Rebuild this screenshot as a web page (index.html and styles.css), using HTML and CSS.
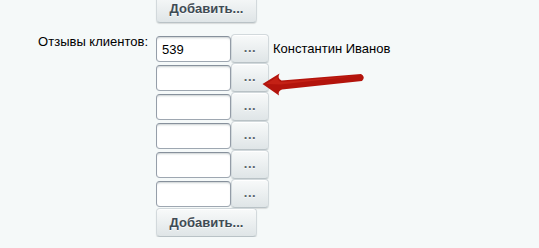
FILE: index.html
```html
<!DOCTYPE html>
<html lang="ru">
<head>
    <meta charset="UTF-8">
    <title>Отзывы клиентов</title>
    <link rel="stylesheet" href="styles.css">
</head>
<body>
    <div class="form">
        <div class="label"></div>
        <div class="field top">
            <button class="adm-btn add">Добавить...</button>
        </div>

        <div class="label">Отзывы клиентов:</div>
        <div class="field">
            <div class="item">
                <input type="text" class="txt" value="539">
                <button class="adm-btn more">...</button>
                <span class="name">Константин Иванов</span>
            </div>
            <div class="item">
                <input type="text" class="txt" value="">
                <button class="adm-btn more">...</button>
            </div>
            <div class="item">
                <input type="text" class="txt" value="">
                <button class="adm-btn more">...</button>
            </div>
            <div class="item">
                <input type="text" class="txt" value="">
                <button class="adm-btn more">...</button>
            </div>
            <div class="item">
                <input type="text" class="txt" value="">
                <button class="adm-btn more">...</button>
            </div>
            <div class="item">
                <input type="text" class="txt" value="">
                <button class="adm-btn more">...</button>
            </div>
            <button class="adm-btn add">Добавить...</button>
        </div>
    </div>

    <svg class="arrow" width="120" height="40" viewBox="255 65 120 40">
        <path d="M262.5,84 L279.5,73.5 Q277,78.5 281.5,80.5 L361,74 Q366,77 362,81 L282,89.5 Q277.5,91 279,95.5 Z" fill="#b3140c"/>
        <path d="M266,84 L278,76.5 Q276.5,80 281,82 L360,75.5 L281,84.5 Z" fill="#cf2a1d" opacity="0.6"/>
    </svg>
</body>
</html>
```

FILE: styles.css
```css
body {
    margin: 0;
    background: #f5f9f9;
    font-family: "Liberation Sans", Arial, sans-serif;
    font-size: 13px;
    color: #000;
}
.form {
    display: grid;
    grid-template-columns: 148px auto;
    column-gap: 8px;
}
.label {
    text-align: right;
}
.top {
    margin-top: -6px;
    margin-bottom: 11px;
}
.field {
    display: flex;
    flex-direction: column;
    align-items: flex-start;
}
.item {
    display: flex;
    align-items: flex-start;
    height: 29px;
}
.txt {
    width: 75px;
    height: 26px;
    margin: 2px 0 0 0;
    box-sizing: border-box;
    border: 1px solid;
    border-color: #87919c #959ea9 #9ea7b1 #959ea9;
    border-radius: 4px;
    padding: 0 5px;
    background: #fff;
    box-shadow: inset 0 2px 2px -1px rgba(180, 188, 191, 0.7);
    font-family: "Liberation Sans", Arial, sans-serif;
    font-size: 13px;
    color: #000;
    outline: none;
}
.adm-btn {
    height: 29px;
    box-sizing: border-box;
    border: 1px solid #d2d9dc;
    border-bottom-color: #b9c2c6;
    border-radius: 4px;
    background: linear-gradient(to bottom, #f8fafa, #dfe5e7);
    box-shadow: 0 1px 1px rgba(0, 0, 0, 0.12), inset 0 1px #fff;
    font-family: "Liberation Sans", Arial, sans-serif;
    font-size: 13px;
    font-weight: bold;
    color: #3f4b54;
    text-shadow: 0 1px rgba(255, 255, 255, 0.7);
    padding: 0;
    cursor: pointer;
}
.add {
    width: 101px;
}
.more {
    width: 38px;
    color: #5a656c;
    letter-spacing: 0.5px;
    padding-bottom: 2px;
}
.name {
    align-self: center;
    margin-left: 4px;
}
.arrow {
    position: absolute;
    left: 255px;
    top: 65px;
}
```
